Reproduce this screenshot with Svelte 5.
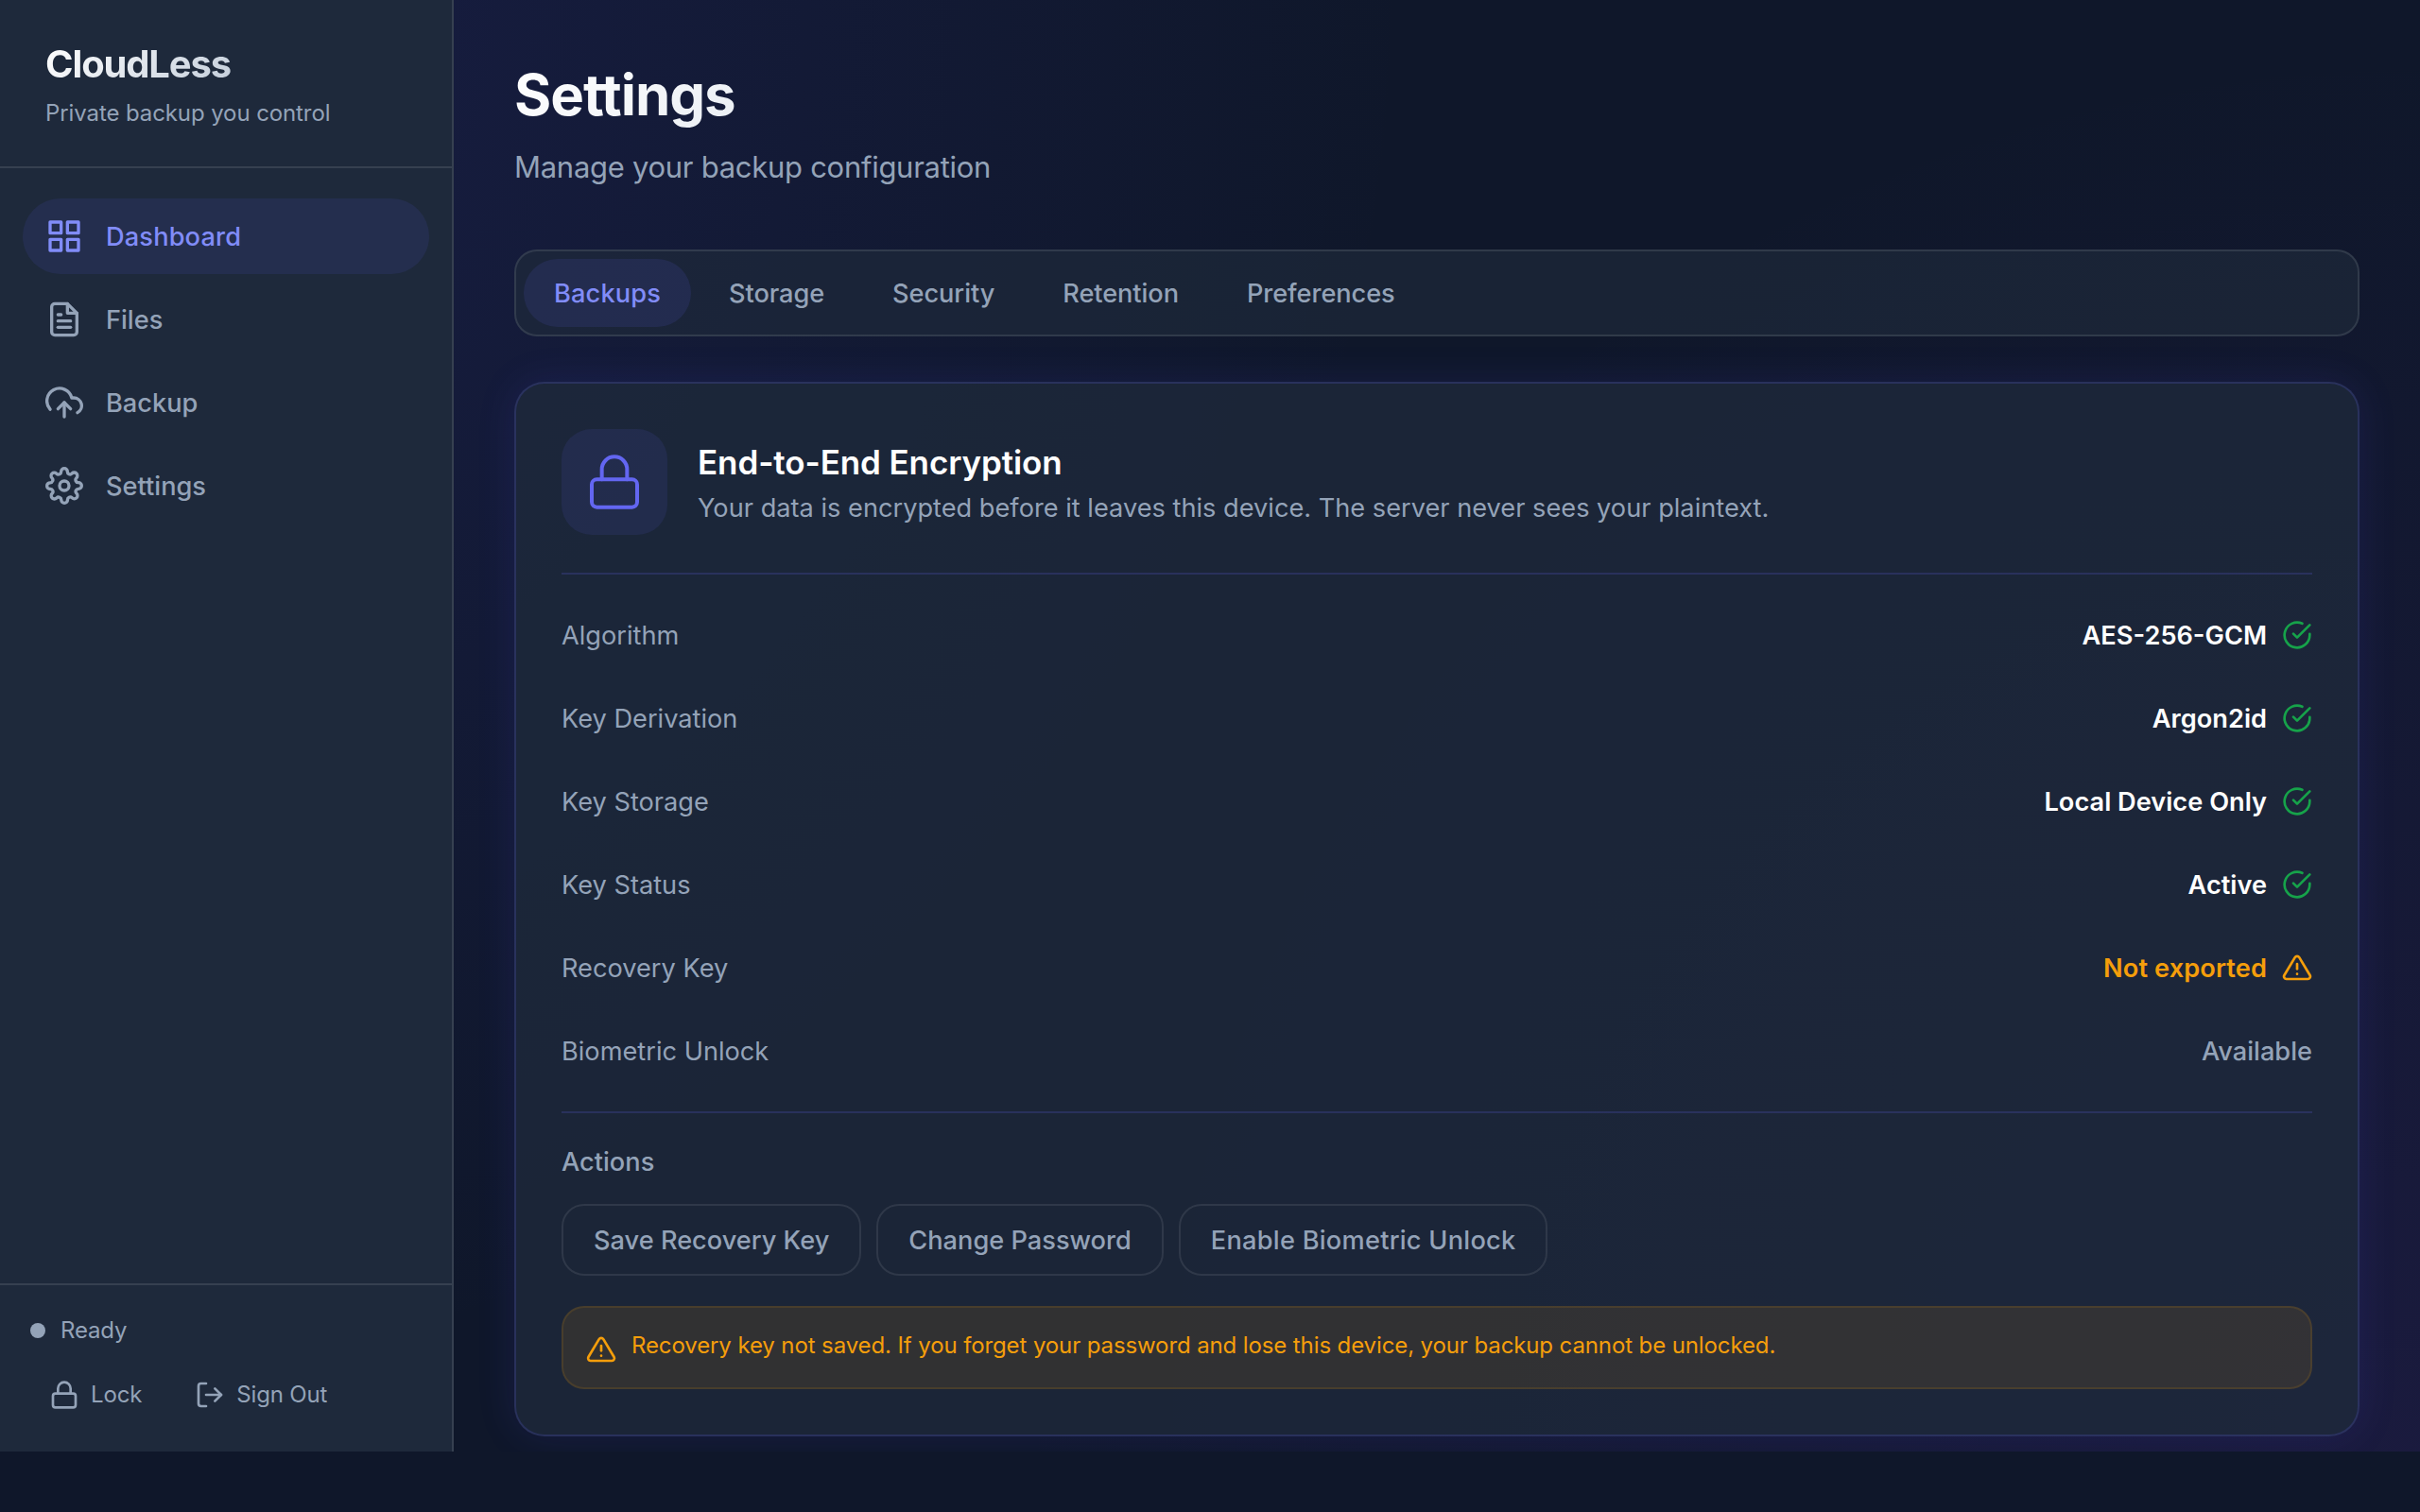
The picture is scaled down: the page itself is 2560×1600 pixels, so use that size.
<script>
  let activeNav = "Dashboard";
  let activeTab = "Backups";

  const navItems = [
    { label: "Dashboard", icon: "grid" },
    { label: "Files", icon: "file" },
    { label: "Backup", icon: "upload" },
    { label: "Settings", icon: "settings" }
  ];

  const tabs = ["Backups", "Storage", "Security", "Retention", "Preferences"];

  const details = [
    { label: "Algorithm", value: "AES-256-GCM", status: "ok" },
    { label: "Key Derivation", value: "Argon2id", status: "ok" },
    { label: "Key Storage", value: "Local Device Only", status: "ok" },
    { label: "Key Status", value: "Active", status: "ok" },
    { label: "Recovery Key", value: "Not exported", status: "warning" },
    { label: "Biometric Unlock", value: "Available", status: "muted" }
  ];

  const actions = ["Save Recovery Key", "Change Password", "Enable Biometric Unlock"];
</script>

{#snippet icon(name, size)}
  <svg
    class="icon {size}"
    viewBox="0 0 24 24"
    fill="none"
    stroke="currentColor"
    stroke-linecap="round"
    stroke-linejoin="round"
  >
    {#if name === "grid"}
      <rect x="3" y="3" width="7" height="7" />
      <rect x="14" y="3" width="7" height="7" />
      <rect x="14" y="14" width="7" height="7" />
      <rect x="3" y="14" width="7" height="7" />
    {:else if name === "file"}
      <path d="M14 2H6a2 2 0 0 0-2 2v16a2 2 0 0 0 2 2h12a2 2 0 0 0 2-2V8z" />
      <polyline points="14 2 14 8 20 8" />
      <line x1="16" y1="13" x2="8" y2="13" />
      <line x1="16" y1="17" x2="8" y2="17" />
      <line x1="10" y1="9" x2="8" y2="9" />
    {:else if name === "upload"}
      <polyline points="16 16 12 12 8 16" />
      <line x1="12" y1="12" x2="12" y2="21" />
      <path d="M20.39 18.39A5 5 0 0 0 18 9h-1.26A8 8 0 1 0 3 16.3" />
    {:else if name === "settings"}
      <circle cx="12" cy="12" r="3" />
      <path d="M19.4 15a1.65 1.65 0 0 0 .33 1.82l.06.06a2 2 0 0 1 0 2.83 2 2 0 0 1-2.83 0l-.06-.06a1.65 1.65 0 0 0-1.82-.33 1.65 1.65 0 0 0-1 1.51V21a2 2 0 0 1-2 2 2 2 0 0 1-2-2v-.09A1.65 1.65 0 0 0 9 19.4a1.65 1.65 0 0 0-1.82.33l-.06.06a2 2 0 0 1-2.83 0 2 2 0 0 1 0-2.83l.06-.06a1.65 1.65 0 0 0 .33-1.82 1.65 1.65 0 0 0-1.51-1H3a2 2 0 0 1-2-2 2 2 0 0 1 2-2h.09A1.65 1.65 0 0 0 4.6 9a1.65 1.65 0 0 0-.33-1.82l-.06-.06a2 2 0 0 1 0-2.83 2 2 0 0 1 2.83 0l.06.06a1.65 1.65 0 0 0 1.82.33H9a1.65 1.65 0 0 0 1-1.51V3a2 2 0 0 1 2-2 2 2 0 0 1 2 2v.09a1.65 1.65 0 0 0 1 1.51 1.65 1.65 0 0 0 1.82-.33l.06-.06a2 2 0 0 1 2.83 0 2 2 0 0 1 0 2.83l-.06.06a1.65 1.65 0 0 0-.33 1.82V9a1.65 1.65 0 0 0 1.51 1H21a2 2 0 0 1 2 2 2 2 0 0 1-2 2h-.09a1.65 1.65 0 0 0-1.51 1z" />
    {:else if name === "lock"}
      <rect x="3" y="11" width="18" height="11" rx="2" ry="2" />
      <path d="M7 11V7a5 5 0 0 1 10 0v4" />
    {:else if name === "logout"}
      <path d="M9 21H5a2 2 0 0 1-2-2V5a2 2 0 0 1 2-2h4" />
      <polyline points="16 17 21 12 16 7" />
      <line x1="21" y1="12" x2="9" y2="12" />
    {:else if name === "ok"}
      <path d="M22 11.08V12a10 10 0 1 1-5.93-9.14" />
      <polyline points="22 4 12 14.01 9 11.01" />
    {:else if name === "warning"}
      <path d="M10.29 3.86L1.82 18a2 2 0 0 0 1.71 3h16.94a2 2 0 0 0 1.71-3L13.71 3.86a2 2 0 0 0-3.42 0z" />
      <line x1="12" y1="9" x2="12" y2="13" />
      <line x1="12" y1="17" x2="12.01" y2="17" />
    {/if}
  </svg>
{/snippet}

<div class="app">
  <aside class="sidebar">
    <div class="brand">
      <h1>CloudLess</h1>
      <p>Private backup you control</p>
    </div>

    <nav>
      {#each navItems as item}
        <button
          class="nav-item"
          class:active={activeNav === item.label}
          on:click={() => (activeNav = item.label)}
        >
          {@render icon(item.icon, "medium")}
          <span>{item.label}</span>
        </button>
      {/each}
    </nav>

    <div class="sidebar-footer">
      <div class="status">
        <span class="dot"></span>
        <span class="text">Ready</span>
      </div>
      <div class="session">
        <button>{@render icon("lock", "small")}<span class="text">Lock</span></button>
        <button>{@render icon("logout", "small")}<span class="text">Sign Out</span></button>
      </div>
    </div>
  </aside>

  <main>
    <header class="page-header">
      <h2>Settings</h2>
      <p>Manage your backup configuration</p>
    </header>

    <div class="tabs">
      {#each tabs as tab}
        <button class:active={activeTab === tab} on:click={() => (activeTab = tab)}>{tab}</button>
      {/each}
    </div>

    <section class="card">
      <div class="card-header">
        <div class="card-icon">{@render icon("lock", "large")}</div>
        <div class="card-title">
          <h3>End-to-End Encryption</h3>
          <p>Your data is encrypted before it leaves this device. The server never sees your plaintext.</p>
        </div>
      </div>

      <div class="details">
        {#each details as row}
          <div class="row">
            <span class="label">{row.label}</span>
            <span class="value {row.status}">
              {row.value}
              {#if row.status !== "muted"}
                {@render icon(row.status, "small")}
              {/if}
            </span>
          </div>
        {/each}
      </div>

      <h4>Actions</h4>
      <div class="actions">
        {#each actions as action}
          <button>{action}</button>
        {/each}
      </div>

      <div class="notice">
        {@render icon("warning", "small")}
        <span>Recovery key not saved. If you forget your password and lose this device, your backup cannot be unlocked.</span>
      </div>
    </section>
  </main>
</div>

<style>
  :global(body) {
    margin: 0;
    background: #0f172a;
  }

  .app {
    display: flex;
    height: 1536px;
    overflow: hidden;
    font-family: Inter, "Liberation Sans", sans-serif;
    font-size: 27.2px;
    color: #94a3b8;
    background:
      radial-gradient(circle at 0% 0%, rgba(79, 70, 229, 0.15), transparent 50%),
      radial-gradient(circle at 100% 100%, rgba(124, 58, 237, 0.1), transparent 50%),
      #0f172a;
  }

  h1, h2, h3, h4, p {
    margin: 0;
  }

  button {
    margin: 0;
    padding: 0;
    border: none;
    background: none;
    font: inherit;
    letter-spacing: inherit;
    color: inherit;
    cursor: pointer;
  }

  .icon {
    display: block;
    flex-shrink: 0;
    stroke-width: 2;
  }

  .small {
    width: 32px;
    height: 32px;
  }

  .medium {
    width: 40px;
    height: 40px;
  }

  .large {
    width: 64px;
    height: 64px;
    stroke-width: 1.5;
  }

  .sidebar {
    display: flex;
    flex-direction: column;
    flex-shrink: 0;
    box-sizing: border-box;
    width: 480px;
    background: #1e293b;
    border-right: 2px solid rgba(255, 255, 255, 0.11);
  }

  .brand {
    box-sizing: border-box;
    height: 178px;
    padding: 44px 48px 0;
    border-bottom: 2px solid rgba(255, 255, 255, 0.11);
  }

  .brand h1 {
    width: fit-content;
    font-size: 40px;
    line-height: 48px;
    font-weight: 700;
    letter-spacing: -1.15px;
    background: linear-gradient(135deg, #ffffff, #c4cedb);
    background-clip: text;
    color: transparent;
  }

  .brand p {
    margin-top: 12px;
    font-size: 24px;
    line-height: 32px;
    letter-spacing: -0.1px;
  }

  nav {
    display: flex;
    flex: 1;
    flex-direction: column;
    gap: 8px;
    padding: 32px 24px;
  }

  .nav-item {
    display: flex;
    align-items: center;
    gap: 24px;
    height: 80px;
    padding: 0 24px;
    border-radius: 40px;
    font-weight: 500;
  }

  .nav-item.active {
    background: rgba(99, 102, 241, 0.1);
    color: #818cf8;
    letter-spacing: 0.15px;
  }

  .sidebar-footer {
    padding: 32px;
    border-top: 2px solid rgba(255, 255, 255, 0.11);
    font-size: 24px;
    letter-spacing: -0.15px;
  }

  .sidebar-footer .text {
    padding-bottom: 2px;
  }

  .status {
    display: flex;
    align-items: center;
    gap: 16px;
    height: 32px;
  }

  .dot {
    width: 16px;
    height: 16px;
    border-radius: 50%;
    background: #94a3b8;
  }

  .session {
    display: flex;
    gap: 16px;
    margin-top: 24px;
  }

  .session button {
    display: flex;
    align-items: center;
    gap: 12px;
    height: 56px;
    padding: 0 20px;
  }

  main {
    flex: 1;
    padding: 64px 64px 0;
  }

  .page-header {
    height: 200px;
  }

  .page-header h2 {
    width: fit-content;
    font-size: 60px;
    line-height: 72px;
    font-weight: 700;
    letter-spacing: -1.05px;
    background: linear-gradient(135deg, #ffffff, #ebeff4);
    background-clip: text;
    color: transparent;
  }

  .page-header p {
    margin-top: 21px;
    font-size: 31px;
    line-height: 40px;
    letter-spacing: -0.28px;
  }

  .tabs {
    display: flex;
    gap: 8px;
    padding: 8px;
    border: 2px solid rgba(255, 255, 255, 0.1);
    border-radius: 24px;
    background: rgba(30, 41, 59, 0.7);
  }

  .tabs button {
    height: 72px;
    padding: 0 32px;
    border-radius: 36px;
    font-weight: 500;
    letter-spacing: -0.08px;
  }

  .tabs button.active {
    background: rgba(99, 102, 241, 0.12);
    color: #818cf8;
    letter-spacing: 0.15px;
  }

  .card {
    margin-top: 48px;
    padding: 48px;
    border: 2px solid rgba(99, 102, 241, 0.2);
    border-radius: 32px;
    background: rgba(30, 41, 59, 0.8);
    box-shadow: 0 0 40px rgba(79, 70, 229, 0.14);
  }

  .card-header {
    display: flex;
    align-items: center;
    gap: 32px;
    padding-bottom: 40px;
    border-bottom: 2px solid rgba(99, 102, 241, 0.2);
  }

  .card-icon {
    display: flex;
    align-items: center;
    justify-content: center;
    width: 112px;
    height: 112px;
    border-radius: 32px;
    background: rgba(99, 102, 241, 0.1);
    color: #6366f1;
  }

  .card-title h3 {
    margin-top: 3px;
    font-size: 35px;
    line-height: 48px;
    font-weight: 600;
    letter-spacing: -0.1px;
    color: #fff;
  }

  .card-title p {
    margin-top: 5px;
    line-height: 40px;
  }

  .details {
    padding: 20px 0;
    border-bottom: 2px solid rgba(99, 102, 241, 0.2);
  }

  .row {
    display: flex;
    align-items: center;
    justify-content: space-between;
    height: 88px;
  }

  .value {
    display: flex;
    align-items: center;
    gap: 16px;
    font-weight: 600;
    color: #fff;
  }

  .value.ok :global(.icon) {
    color: #16a34a;
  }

  .value.warning {
    color: #f59e0b;
    letter-spacing: 0.1px;
  }

  .value.muted {
    color: #94a3b8;
    font-weight: 500;
  }

  h4 {
    margin-top: 32px;
    font-size: 27.2px;
    line-height: 40px;
    font-weight: 500;
  }

  .actions {
    display: flex;
    gap: 16px;
    margin-top: 24px;
  }

  .actions button {
    height: 76px;
    padding: 0 32px;
    border: 2px solid rgba(255, 255, 255, 0.09);
    border-radius: 24px;
    font-weight: 500;
  }

  .actions button:last-child {
    letter-spacing: 0.25px;
  }

  .notice {
    display: flex;
    gap: 16px;
    box-sizing: border-box;
    height: 88px;
    margin-top: 32px;
    padding: 24px;
    border: 2px solid rgba(245, 158, 11, 0.12);
    border-radius: 24px;
    background: rgba(245, 158, 11, 0.1);
    color: #f59e0b;
    font-size: 24px;
    line-height: 32px;
    letter-spacing: -0.11px;
  }

  .notice :global(.icon) {
    margin-top: 4px;
  }
</style>
